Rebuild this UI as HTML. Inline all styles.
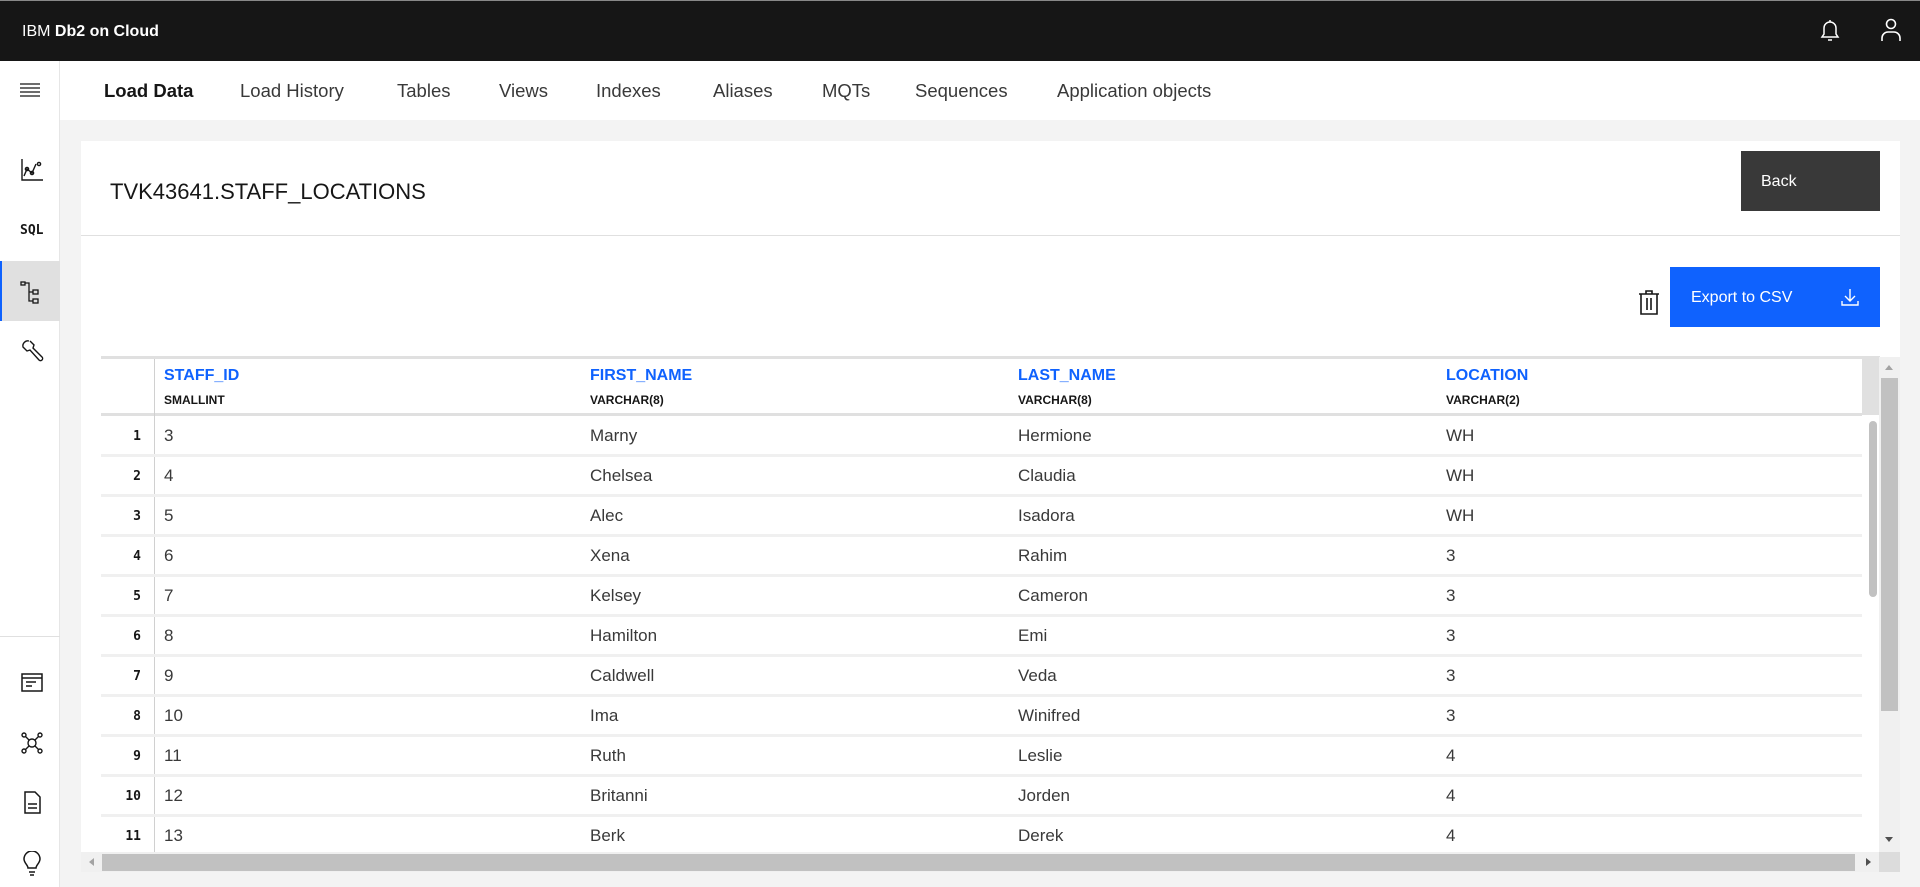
<!DOCTYPE html>
<html><head><meta charset="utf-8"><style>
*{box-sizing:border-box;margin:0;padding:0}
body{width:1920px;height:887px;overflow:hidden;background:#f3f3f3;font-family:"Liberation Sans",sans-serif;color:#161616;position:relative}
.abs{position:absolute}
.top{left:0;top:0;width:1920px;height:61px;background:#161616;border-top:1px solid #888}
.logo{left:22px;top:23px;color:#fff;font-size:16px}
.side{left:0;top:61px;width:60px;height:826px;background:#fff;border-right:1px solid #e6e6e6}
.nav{left:60px;top:61px;width:1860px;height:59px;background:#fff}
.nav span{position:absolute;top:19px;font-size:18.5px;color:#393939}
.card{left:81px;top:141px;width:1819px;height:731px;background:#fff}
.cell{position:absolute;font-size:17px;color:#393939}
.rn{position:absolute;width:34px;text-align:right;font-size:13px;font-weight:bold;font-family:"DejaVu Sans Mono",monospace;color:#161616}
.hl{position:absolute;left:101px;width:1761px;height:3px;background:#f0f0f0}
.hn{position:absolute;top:367px;font-size:16px;font-weight:bold;color:#0f62fe}
.ht{position:absolute;top:393px;font-size:12px;font-weight:bold;color:#161616}
svg{position:absolute}
</style></head><body>
<div class="abs top"></div>
<div class="abs logo">IBM <b>Db2 on Cloud</b></div>
<svg style="left:1817px;top:18px" width="26" height="26" viewBox="0 0 26 26" fill="none" stroke="#fff" stroke-width="1.5"><path d="M5 19h16l-2-3v-6a6 6 0 0 0-12 0v6z"/><path d="M13 2v2M11 22h4"/></svg>
<svg style="left:1879px;top:17px" width="24" height="26" viewBox="0 0 24 26" fill="none" stroke="#fff" stroke-width="1.6"><circle cx="12" cy="7" r="4.5"/><path d="M3 24v-3a6 6 0 0 1 6-6h6a6 6 0 0 1 6 6v3"/></svg>
<div class="abs side"></div>
<div class="abs" style="left:0;top:636px;width:60px;height:1px;background:#e0e0e0"></div>
<div class="abs" style="left:0;top:261px;width:60px;height:60px;background:#e0e0e0;border-left:2px solid #0f62fe"></div>
<svg style="left:20px;top:81px" width="20" height="18" stroke="#161616" stroke-width="1.3"><path d="M0 3h20M0 7h20M0 11h20M0 15h20"/></svg>
<svg style="left:20px;top:158px" width="24" height="24" fill="none" stroke="#161616" stroke-width="1.4"><path d="M2 1v21h21"/><path d="M4 18l3-7 5 4 4-9"/><circle cx="7" cy="11" r="1.6"/><circle cx="12" cy="15" r="1.6"/><circle cx="19" cy="6" r="1.6"/></svg>
<div class="abs" style="left:20px;top:223px;font-size:13px;font-weight:bold;font-family:'DejaVu Sans Mono',monospace">SQL</div>
<svg style="left:20px;top:280px" width="22" height="24" fill="none" stroke="#161616" stroke-width="1.3"><rect x="1" y="2" width="4" height="3"/><path d="M5 3h4v18h4M9 12h4"/><rect x="13" y="10" width="5" height="4"/><rect x="13" y="19" width="5" height="4"/></svg>
<svg style="left:20px;top:339px" width="24" height="24" fill="none" stroke="#161616" stroke-width="1.4"><path d="M9 2a5 5 0 0 0-6 6l4 4 3-1 9 10a2 2 0 0 0 3-3L13 9l1-3-4-4"/></svg>
<svg style="left:21px;top:673px" width="22" height="20" fill="none" stroke="#161616" stroke-width="1.5"><rect x="1" y="1" width="20" height="17"/><path d="M1 5h20M5 9h10M5 13h6"/></svg>
<svg style="left:21px;top:732px" width="22" height="22" fill="none" stroke="#161616" stroke-width="1.4"><circle cx="3" cy="3" r="2"/><circle cx="19" cy="3" r="2"/><circle cx="3" cy="19" r="2"/><circle cx="19" cy="19" r="2"/><circle cx="11" cy="11" r="4"/><path d="M4.5 4.5l3.5 3.5M17.5 4.5l-3.5 3.5M4.5 17.5l3.5-3.5M17.5 17.5l-3.5-3.5"/></svg>
<svg style="left:24px;top:791px" width="18" height="24" fill="none" stroke="#161616" stroke-width="1.5"><path d="M1 1h10l5 5v16H1z"/><path d="M4 13h9M4 17h9"/></svg>
<svg style="left:23px;top:851px" width="18" height="26" fill="none" stroke="#161616" stroke-width="1.5"><path d="M5 17c0-3-4-5-4-9a8 8 0 0 1 16 0c0 4-4 6-4 9z"/><path d="M6 21h6M7 24h4"/></svg>
<div class="abs nav">
<span style="left:44px;font-weight:bold;color:#161616">Load Data</span>
<span style="left:180px">Load History</span>
<span style="left:337px">Tables</span>
<span style="left:439px">Views</span>
<span style="left:536px">Indexes</span>
<span style="left:653px">Aliases</span>
<span style="left:762px">MQTs</span>
<span style="left:855px">Sequences</span>
<span style="left:997px">Application objects</span>
</div>
<div class="abs card"></div>
<div class="abs" style="left:110px;top:179px;font-size:22px;color:#161616">TVK43641.STAFF_LOCATIONS</div>
<div class="abs" style="left:81px;top:235px;width:1819px;height:1px;background:#e0e0e0"></div>
<div class="abs" style="left:1741px;top:151px;width:139px;height:60px;background:#393939;color:#fff;font-size:16px;padding:22px 0 0 20px">Back</div>
<svg style="left:1638px;top:290px" width="22" height="25" fill="none" stroke="#161616" stroke-width="1.6"><path d="M1 4h20M8 4V1h6v3M3 4v20h16V4M9 8v12M13 8v12"/></svg>
<div class="abs" style="left:1670px;top:267px;width:210px;height:60px;background:#0f62fe;color:#fff;font-size:16px;padding:22px 0 0 21px">Export to CSV</div>
<svg style="left:1841px;top:288px" width="18" height="18" fill="none" stroke="#fff" stroke-width="1.4"><path d="M9 1v12M4 8l5 5 5-5M1 13v4h16v-4"/></svg>
<div class="abs" style="left:101px;top:356px;width:1779px;height:3px;background:#e0e0e0"></div>
<div class="abs" style="left:1862px;top:359px;width:18px;height:56px;background:#e0e0e0"></div>
<div class="abs" style="left:101px;top:413px;width:1761px;height:3px;background:#e0e0e0"></div>
<div class="abs" style="left:154px;top:359px;width:1px;height:493px;background:#d0d0d0"></div>
<div class="hn" style="left:164px">STAFF_ID</div><div class="ht" style="left:164px">SMALLINT</div>
<div class="hn" style="left:590px">FIRST_NAME</div><div class="ht" style="left:590px">VARCHAR(8)</div>
<div class="hn" style="left:1018px">LAST_NAME</div><div class="ht" style="left:1018px">VARCHAR(8)</div>
<div class="hn" style="left:1446px">LOCATION</div><div class="ht" style="left:1446px">VARCHAR(2)</div>
<div class="hl" style="top:454px"></div><div class="hl" style="top:494px"></div><div class="hl" style="top:534px"></div><div class="hl" style="top:574px"></div><div class="hl" style="top:614px"></div><div class="hl" style="top:654px"></div><div class="hl" style="top:694px"></div><div class="hl" style="top:734px"></div><div class="hl" style="top:774px"></div><div class="hl" style="top:814px"></div>
<div class="rn" style="left:107px;top:429px">1</div><div class="cell" style="left:164px;top:426px">3</div><div class="cell" style="left:590px;top:426px">Marny</div><div class="cell" style="left:1018px;top:426px">Hermione</div><div class="cell" style="left:1446px;top:426px">WH</div>
<div class="rn" style="left:107px;top:469px">2</div><div class="cell" style="left:164px;top:466px">4</div><div class="cell" style="left:590px;top:466px">Chelsea</div><div class="cell" style="left:1018px;top:466px">Claudia</div><div class="cell" style="left:1446px;top:466px">WH</div>
<div class="rn" style="left:107px;top:509px">3</div><div class="cell" style="left:164px;top:506px">5</div><div class="cell" style="left:590px;top:506px">Alec</div><div class="cell" style="left:1018px;top:506px">Isadora</div><div class="cell" style="left:1446px;top:506px">WH</div>
<div class="rn" style="left:107px;top:549px">4</div><div class="cell" style="left:164px;top:546px">6</div><div class="cell" style="left:590px;top:546px">Xena</div><div class="cell" style="left:1018px;top:546px">Rahim</div><div class="cell" style="left:1446px;top:546px">3</div>
<div class="rn" style="left:107px;top:589px">5</div><div class="cell" style="left:164px;top:586px">7</div><div class="cell" style="left:590px;top:586px">Kelsey</div><div class="cell" style="left:1018px;top:586px">Cameron</div><div class="cell" style="left:1446px;top:586px">3</div>
<div class="rn" style="left:107px;top:629px">6</div><div class="cell" style="left:164px;top:626px">8</div><div class="cell" style="left:590px;top:626px">Hamilton</div><div class="cell" style="left:1018px;top:626px">Emi</div><div class="cell" style="left:1446px;top:626px">3</div>
<div class="rn" style="left:107px;top:669px">7</div><div class="cell" style="left:164px;top:666px">9</div><div class="cell" style="left:590px;top:666px">Caldwell</div><div class="cell" style="left:1018px;top:666px">Veda</div><div class="cell" style="left:1446px;top:666px">3</div>
<div class="rn" style="left:107px;top:709px">8</div><div class="cell" style="left:164px;top:706px">10</div><div class="cell" style="left:590px;top:706px">Ima</div><div class="cell" style="left:1018px;top:706px">Winifred</div><div class="cell" style="left:1446px;top:706px">3</div>
<div class="rn" style="left:107px;top:749px">9</div><div class="cell" style="left:164px;top:746px">11</div><div class="cell" style="left:590px;top:746px">Ruth</div><div class="cell" style="left:1018px;top:746px">Leslie</div><div class="cell" style="left:1446px;top:746px">4</div>
<div class="rn" style="left:107px;top:789px">10</div><div class="cell" style="left:164px;top:786px">12</div><div class="cell" style="left:590px;top:786px">Britanni</div><div class="cell" style="left:1018px;top:786px">Jorden</div><div class="cell" style="left:1446px;top:786px">4</div>
<div class="rn" style="left:107px;top:829px">11</div><div class="cell" style="left:164px;top:826px">13</div><div class="cell" style="left:590px;top:826px">Berk</div><div class="cell" style="left:1018px;top:826px">Derek</div><div class="cell" style="left:1446px;top:826px">4</div>
<div class="abs" style="left:1869px;top:421px;width:8px;height:176px;background:#c1c1c1;border-radius:4px"></div>
<div class="abs" style="left:1879px;top:357px;width:21px;height:495px;background:#f0f0f0"></div>
<div class="abs" style="left:1881px;top:378px;width:17px;height:333px;background:#c1c1c1"></div>
<div class="abs" style="left:1885px;top:365px;width:0;height:0;border:4px solid transparent;border-bottom:5px solid #a3a3a3;border-top:0"></div>
<div class="abs" style="left:1885px;top:837px;width:0;height:0;border:4px solid transparent;border-top:5px solid #505050;border-bottom:0"></div>
<div class="abs" style="left:81px;top:852px;width:1819px;height:20px;background:#f0f0f0"></div>
<div class="abs" style="left:102px;top:854px;width:1753px;height:17px;background:#c1c1c1"></div>
<div class="abs" style="left:1879px;top:852px;width:21px;height:20px;background:#dcdcdc"></div>
<div class="abs" style="left:89px;top:858px;width:0;height:0;border:4px solid transparent;border-right:5px solid #a3a3a3;border-left:0"></div>
<div class="abs" style="left:1866px;top:858px;width:0;height:0;border:4px solid transparent;border-left:5px solid #505050;border-right:0"></div>
</body></html>
